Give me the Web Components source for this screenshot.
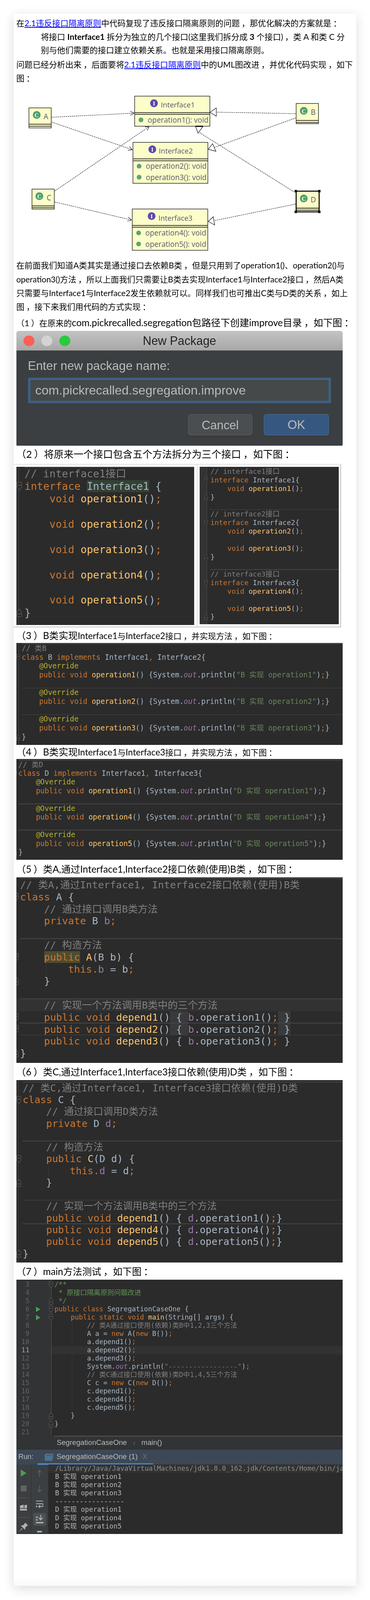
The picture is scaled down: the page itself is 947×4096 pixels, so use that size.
<!DOCTYPE html>
<html lang="zh">
<head>
<meta charset="utf-8">
<title>接口隔离原则</title>
<style>
  html, body { margin: 0; padding: 0; background: #fff; }
</style>
</head>
<body>
<blog-card>
  <blog-para>在<a href="#" style="color:#00f">2.1违反接口隔离原则</a>中代码复现了违反接口隔离原则的问题<cn-punct>，</cn-punct>那优化解决的方案就是<cn-punct>：</cn-punct></blog-para>
  <blog-para indent>将接口 <b>Interface1</b> 拆分为独立的几个接口(这里我们拆分成 <b>3</b> 个接口)<cn-punct>，</cn-punct>类 A 和类 C 分<br>别与他们需要的接口建立依赖关系。也就是采用接口隔离原则。</blog-para>
  <blog-para style="margin-top:2px">问题已经分析出来<cn-punct>，</cn-punct>后面要将<a href="#" style="color:#00f">2.1违反接口隔离原则</a>中的UML图改进<cn-punct>，</cn-punct>并优化代码实现<cn-punct>，</cn-punct>如下<br>图<cn-punct>：</cn-punct></blog-para>
  <uml-diagram></uml-diagram>
  <blog-para style="--lh:40.7px">在前面我们知道A类其实是通过接口去依赖B类<cn-punct>，</cn-punct>但是只用到了operation1()、operation2()与<br>operation3()方法<cn-punct>，</cn-punct>所以上面我们只需要让B类去实现Interface1与Interface2接口<cn-punct>，</cn-punct>然后A类<br>只需要与Interface1与Interface2发生依赖就可以。同样我们也可推出C类与D类的关系<cn-punct>，</cn-punct>如上<br>图<cn-punct>，</cn-punct>接下来我们用代码的方式实现<cn-punct>：</cn-punct></blog-para>

  <sub-heading style="--h:51.2px;--pt:2px"><cn-punct>（</cn-punct>1<cn-punct>）</cn-punct>在原来的<span style="font-size:28px">com.pickrecalled.segregation包路径下创建improve目录<cn-punct>，</cn-punct>如下图<cn-punct>：</cn-punct></span></sub-heading>
  <package-dialog></package-dialog>

  <sub-heading style="--h:50px;--fs:29px"><cn-punct>（</cn-punct>2<cn-punct>）</cn-punct>将原来一个接口包含五个方法拆分为三个接口<cn-punct>，</cn-punct>如下图<cn-punct>：</cn-punct></sub-heading>
  <code-table>
    <code-panel slot="left" src="one"></code-panel>
    <code-panel slot="right" src="three"></code-panel>
  </code-table>

  <sub-heading style="--h:46px;--pt:4px;--fs:28px"><cn-punct>（</cn-punct>3<cn-punct>）</cn-punct>B类实现<span style="font-size:26px">Interface1</span><span style="font-size:24px">与</span><span style="font-size:26px">Interface2</span><span style="font-size:24px">接口<cn-punct>，</cn-punct>并实现方法<cn-punct>，</cn-punct>如下图<cn-punct>：</cn-punct></span></sub-heading>
  <code-panel src="b"></code-panel>
  <sub-heading style="--h:42px;--fs:28px"><cn-punct>（</cn-punct>4<cn-punct>）</cn-punct>B类实现<span style="font-size:26px">Interface1</span><span style="font-size:24px">与</span><span style="font-size:26px">Interface3</span><span style="font-size:24px">接口<cn-punct>，</cn-punct>并实现方法<cn-punct>，</cn-punct>如下图<cn-punct>：</cn-punct></span></sub-heading>
  <code-panel src="d"></code-panel>
  <sub-heading style="--h:52px;--fs:28px;--pt:4px"><cn-punct>（</cn-punct>5<cn-punct>）</cn-punct>类A,通过Interface1,Interface2接口依赖(使用)B类<cn-punct>，</cn-punct>如下图<cn-punct>：</cn-punct></sub-heading>
  <code-panel src="a"></code-panel>
  <sub-heading style="--h:50px;--fs:28px;--pt:2px"><cn-punct>（</cn-punct>6<cn-punct>）</cn-punct>类C,通过Interface1,Interface3接口依赖(使用)D类<cn-punct>，</cn-punct>如下图<cn-punct>：</cn-punct></sub-heading>
  <code-panel src="c"></code-panel>
  <sub-heading style="--h:50.5px;--fs:28px;--pt:3px"><cn-punct>（</cn-punct>7<cn-punct>）</cn-punct>main方法测试<cn-punct>，</cn-punct>如下图<cn-punct>：</cn-punct></sub-heading>
  <run-window></run-window>
</blog-card>

<script>
const CN = '"Lato","Noto Sans CJK SC",sans-serif';
const MONO = '"DejaVu Sans Mono","Noto Sans CJK SC",monospace';

// all sizes below are in reference pixels; scale() brings them down to the 947 wide window
const S = 0.87;
const scale = html => html
  .replace(/(-?\d*\.?\d+)px/g, (_, v) => +(v * S).toFixed(3) + 'px')
  .replace(/(<svg\b[^>]*?\swidth=")([\d.]+)("\s+height=")([\d.]+)"/g,
    (_, a1, w, a2, h) => `${a1}${+(w * S).toFixed(3)}${a2}${+(h * S).toFixed(3)}"`);
const mount = (el, html) => { el.attachShadow({ mode: 'open' }).innerHTML = scale(html); };
document.querySelectorAll('[style]').forEach(el => el.setAttribute('style', scale(el.getAttribute('style'))));

// token helpers for the code screenshots
const tok = cls => t => `<span class="${cls}">${t}</span>`;
const k = tok('k'), m = tok('m'), c = tok('c'), s = tok('s'), a = tok('a'), f = tok('f'), o = tok('o');
const d = tok('d'), hb = tok('hb'), hy = tok('hy'), hg = tok('hg');
const semi = k(';');

class BlogCard extends HTMLElement {
  connectedCallback() {
    mount(this, `
      <style>
        :host {
          display: block; box-sizing: border-box; width: 1008px; height: 4627px;
          margin: 40px 40px 40px 40px; padding: 8px; color: #000;
          background: linear-gradient(#fff calc(100% - 24px), #f8f8f8);
          box-shadow: 0 8px 32px rgba(0,0,0,.14);
          font: 24px/40px ${CN};
        }
      </style><slot></slot>`);
  }
}

class BlogPara extends HTMLElement {
  connectedCallback() {
    mount(this, `
      <style>
        :host { display: block; white-space: nowrap; line-height: var(--lh, 40px); filter: blur(.3px); }
        :host([indent]) { margin-left: 72px; }
      </style><slot></slot>`);
  }
}

class CnPunct extends HTMLElement {
  connectedCallback() {
    // line-height 0: the second font must not make the line box grow
    mount(this, `
      <style>:host { display: inline; font-family: "Noto Sans CJK TC",sans-serif; line-height: 0; }</style><slot></slot>`);
  }
}

class SubHeading extends HTMLElement {
  connectedCallback() {
    mount(this, `
      <style>
        :host {
          display: flex; align-items: center; box-sizing: border-box; white-space: nowrap; filter: blur(.3px);
          height: var(--h, 50px); padding-top: var(--pt, 0); font-size: var(--fs, 24px); line-height: 1;
        }
        div { display: block; }
      </style><div><slot></slot></div>`);
  }
}

class UmlDiagram extends HTMLElement {
  connectedCallback() {
    const LINE = '#1c1c1c', FILL = '#fdfdc9', TXT = '#55566a';
    const dash = (x1, y1, x2, y2) => `<line x1="${x1}" y1="${y1}" x2="${x2}" y2="${y2}" stroke="${LINE}" stroke-width="1.3" stroke-dasharray="4 2"/>`;
    const dep = (x1, y1, x2, y2) => {
      const an = Math.atan2(y2 - y1, x2 - x1), l = 13;
      const p = sg => `${x2 - l * Math.cos(an + sg * .5)},${y2 - l * Math.sin(an + sg * .5)}`;
      return dash(x1, y1, x2, y2) + `<polyline points="${p(1)} ${x2},${y2} ${p(-1)}" fill="none" stroke="${LINE}" stroke-width="1.3"/>`;
    };
    const tri = pts => `<polygon points="${pts}" fill="#fff" stroke="${LINE}" stroke-width="1.5"/>`;
    const circle = (x, y, col, ch) => `<circle cx="${x}" cy="${y}" r="11.5" fill="${col}"/><text x="${x}" y="${y + 1}" fill="#fff" font-family="Liberation Serif,serif" font-size="17" font-weight="700" text-anchor="middle" dominant-baseline="central">${ch}</text>`;
    const txt = (x, y, v, fs = 21.9) => `<text x="${x}" y="${y}" fill="${TXT}" font-size="${fs}" dominant-baseline="central">${v}</text>`;
    const box = (x1, y1, x2, y2, l1, l2) => `<rect x="${x1}" y="${y1}" width="${x2 - x1}" height="${y2 - y1}" fill="${FILL}" stroke="${LINE}" stroke-width="1.6"/>
      <line x1="${x1}" x2="${x2}" y1="${l1}" y2="${l1}" stroke="${LINE}" stroke-width="2"/><line x1="${x1}" x2="${x2}" y1="${l2}" y2="${l2}" stroke="${LINE}" stroke-width="2"/>`;
    const op = (x, y, v) => `<circle cx="${x}" cy="${y}" r="7" fill="#5fa374"/>` + txt(x + 20, y, v);
    const handles = [[873.8, 563], [943.5, 563], [873.8, 624], [943.5, 624]]
      .map(([x, y]) => `<rect x="${x - 3.5}" y="${y - 3.5}" width="7" height="7" fill="#000"/>`).join('');
    mount(this, `
      <style>:host { display: block; height: 510px; filter: blur(.35px); } svg { display: block; font-family: "Open Sans",sans-serif; }</style>
      <svg width="960.3" height="510" viewBox="48 250 965 510" preserveAspectRatio="none">
        ${dep(152, 345.6, 396, 333.5)}${dep(152, 359.7, 390.5, 441)}${dep(161.8, 562.3, 440.7, 373)}${dep(161.8, 595, 388.4, 648)}
        ${dash(873.8, 335, 639, 330.6)}${dash(873.8, 347.5, 634, 434)}${dash(868, 564.7, 588, 390)}${dash(873.8, 601, 632, 650)}
        ${box(397.5, 283.5, 620, 372, 332, 337)}
        ${circle(454.7, 304.4, '#6049ac', 'I')}${txt(475, 308.3, 'Interface1', 21.3)}${op(416.3, 353.3, 'operation1(): void')}
        ${box(392.6, 419.5, 614, 540, 468, 473.6)}
        ${circle(449.8, 440, '#6049ac', 'I')}${txt(469, 444, 'Interface2', 21.3)}${op(410.7, 489.6, 'operation2(): void')}${op(410.7, 522, 'operation3(): void')}
        ${box(390.5, 615.6, 613.7, 737, 664, 669)}
        ${circle(447.7, 636.5, '#6049ac', 'I')}${txt(468, 640.8, 'Interface3', 21.3)}${op(409.3, 686, 'operation4(): void')}${op(409.3, 718.4, 'operation5(): void')}
        ${box(85, 318, 151, 377, 366, 372)}${circle(108, 338.8, '#4f9f6f', 'C')}${txt(128.3, 342.7, 'A', 22)}
        ${box(875, 305, 941, 364.5, 355, 361)}${circle(897.5, 326.7, '#4f9f6f', 'C')}${txt(918.4, 330.6, 'B', 22)}
        ${box(94, 557, 160, 616, 606.4, 611.7)}${circle(115.8, 577.8, '#4f9f6f', 'C')}${txt(137.4, 581.7, 'C', 22)}
        <rect x="875" y="563" width="68" height="61" fill="${FILL}" stroke="#000" stroke-width="3"/>
        <line x1="875" x2="943" y1="613" y2="613" stroke="#000" stroke-width="2"/><line x1="875" x2="943" y1="619" y2="619" stroke="#000" stroke-width="2"/>
        ${circle(897.5, 584.6, '#4f9f6f', 'C')}${txt(917.7, 588.5, 'D', 22)}${handles}
        ${tri('620.1,330.7 638.9,318.3 638.9,342.7')}${tri('615.1,440 627.9,423.3 637.9,445.7')}
        ${tri('577.6,373 599.4,373 585,392.3')}<rect x="577.6" y="370.5" width="22" height="3" fill="#000"/>${tri('615,652 630,638.4 634,662.6')}
      </svg>`);
  }
}

class PackageDialog extends HTMLElement {
  connectedCallback() {
    mount(this, `
      <style>
        :host { display: block; width: 960px; height: 338px; border-radius: 9px 9px 3px 3px; overflow: hidden; background: #3c3f41; color: #bbb; line-height: 1; font-family: "Liberation Sans",sans-serif; filter: blur(.35px); }
        .bar { height: 58px; display: flex; align-items: center; justify-content: center; position: relative; color: #222; font-size: 35px;
               background: linear-gradient(#c4c3c4, #a8a7a8); border-bottom: 2px solid #555; box-sizing: border-box; }
        .dots { position: absolute; left: 21.4px; top: 13px; display: flex; gap: 20.8px; }
        .dots i { width: 32px; height: 32px; border-radius: 50%; }
        .body { padding: 26px 35px 0 35.3px; }
        .label { font-size: 36px; height: 38px; line-height: 38px; margin-left: -1.4px; }
        .input { box-sizing: border-box; height: 74px; margin-top: 16px; border: 7px solid #3d6185; border-radius: 3px; background: #45494a; font-size: 36.9px; line-height: 60px; padding-left: 13.7px; }
        .btns { display: flex; justify-content: flex-end; gap: 33.5px; margin-top: 33px; margin-right: 5.6px; }
        .btn { box-sizing: border-box; width: 190px; height: 63px; border-radius: 7px; font-size: 35px; display: flex; align-items: center; justify-content: center;
               background: #4a4e50; border: 2px solid #5c5f61; box-shadow: 0 2px 3px #333; }
        .btn.ok { width: 191px; background: #365880; border-color: #4c708c; font-size: 36px; }
      </style>
      <div class="bar">
        <div class="dots"><i style="background:#fc5f57"></i><i style="background:#d3d3d3"></i><i style="background:#2ac940"></i></div>
        New Package
      </div>
      <div class="body">
        <div class="label">Enter new package name:</div>
        <div class="input">com.pickrecalled.segregation.improve</div>
        <div class="btns"><div class="btn">Cancel</div><div class="btn ok">OK</div></div>
      </div>`);
  }
}

class CodeTable extends HTMLElement {
  connectedCallback() {
    mount(this, `
      <style>
        :host { display: grid; grid-template-columns: 538.8px 422.2px; box-sizing: border-box; width: 964px; height: 480px; margin: 4px 0 0 -8px;
                border-top: 2px solid #c4c4c4; border-bottom: 3px solid #c4c4c4; border-right: 3px solid #c4c4c4; }
        div { box-sizing: border-box; padding: 6px 0 0 8px; }
        .r { border-left: 2px solid #c4c4c4; padding-left: 7px; }
      </style>
      <div><slot name="left"></slot></div><div class="r"><slot name="right"></slot></div>`);
  }
}

// one line: html, plus optional sep (rule above), fold (o|c), bg, guide x
const L = (h = '', opt = {}) => ({ h, ...opt });

const iface = (n, ops, gapAfter) => {
  const rows = [L(c(`// interface${n}接口`), { sep: 1 }), L(`${k('interface')} ${`Interface${n}`}{`, { fold: 'o' })];
  ops.forEach((p, i) => {
    if (i) rows.push(L());
    rows.push(L(`    ${k('void')} ${m(`operation${p}`)}()${semi}`));
  });
  rows.push(L('}', { fold: 'c' }));
  if (gapAfter) rows.push(L());
  return rows;
};
const impl = (cls, list) => {
  const rows = [];
  list.forEach((p, i) => {
    rows.push(L(`    ${a('@Override')}`, i ? { sep: 1 } : {}));
    rows.push(L(`    ${k('public')} ${k('void')} ${m(`operation${p}`)}() {System.${o('out')}.println(${s(`"${cls} 实现 operation${p}"`)})${semi}}`));
    if (i < list.length - 1) rows.push(L());
  });
  return rows;
};

const PANELS = {
  one: { w: 523.8, h: 466, top: 2.4, x: 24.1, size: 30.45, lh: 37.2, gx: 6, fx: 1, rows: [
    L(c('// interface1接口'), { sep: 1 }),
    L(`${k('interface')} ${hg('Interface1')} {`, { fold: 'o' }),
    ...[1, 2, 3, 4, 5].flatMap((p, i) => [...(i ? [L()] : []), L(`    ${k('void')} ${m(`operation${p}`)}()${semi}`)]),
    L('}', { fold: 'c' })] },
  three: { w: 410, h: 464, top: 1.4, x: 31.9, size: 20.75, lh: 25.2, gx: 20.8, gbg: '#313335', fx: 14, rows: [
    ...iface(1, [1], 1), ...iface(2, [2, 3], 1), ...iface(3, [4, 5], 0)] },
  b: { w: 960, h: 300, top: 3.3, x: 15.8, size: 21.4, lh: 26.1, gx: 6, fx: 0, rows: [
    L(c('// 类B'), { sep: 1 }),
    L(`${k('class')} B ${k('implements')} Interface1${k(',')} Interface2{`, { fold: 'o' }),
    ...impl('B', [1, 2, 3]), L('}', { fold: 'c' })] },
  d: { w: 960, h: 296, top: 3.6, x: 6.1, size: 21.4, lh: 25.8, gx: -9, fx: -9, rows: [
    L(c('// 类D'), { sep: 1 }),
    L(`${k('class')} D ${k('implements')} Interface1${k(',')} Interface3{`, { fold: 'o' }),
    ...impl('D', [1, 4, 5]), L('}', { fold: 'c' })] },
  a: { w: 960, h: 546, top: 4.3, x: 11, size: 29.35, lh: 35.4, gx: -9, fx: -8, rows: [
    L(c('// 类A,通过Interface1, Interface2接口依赖(使用)B类'), { sep: 1 }),
    L(`${k('class')} A {`, { fold: 'o' }),
    L(`    ${c('// 通过接口调用B类方法')}`),
    L(`    ${k('private')} B ${f('b')}${semi}`),
    L(),
    L(`    ${c('// 构造方法')}`, { sep: 1 }),
    L(`    ${hy(k('public'))} ${m('A')}(B b) {`, { fold: 'o' }),
    L(`        ${k('this')}${k('.')}${f('b')} = b${semi}`, { guide: 87.3 }),
    L('    }', { fold: 'c' }),
    L(),
    L(`    ${c('// 实现一个方法调用B类中的三个方法')}`, { sep: 1, bg: '#323232' }),
    L(`    ${k('public')} ${k('void')} ${m('depend1')}()${hb(' { ')}${f('b')}.operation1()${semi}${hb(' }')}`, { fold: 'o' }),
    L(`    ${k('public')} ${k('void')} ${m('depend2')}()${hb(' { ')}${f('b')}.operation2()${semi}${hb(' }')}`, { fold: 'o', sep: 1 }),
    L(`    ${k('public')} ${k('void')} ${m('depend3')}() { ${f('b')}.operation3()${semi} }`, { sep: 1 }),
    L('}', { fold: 'c' })] },
  c: { w: 960, h: 537.5, top: 7, x: 18.6, size: 28.85, lh: 34.8, gx: 5, fx: 0, rows: [
    L(c('// 类C,通过Interface1, Interface3接口依赖(使用)D类'), { sep: 1 }),
    L(`${k('class')} C {`, { fold: 'o' }),
    L(`    ${c('// 通过接口调用D类方法')}`),
    L(`    ${k('private')} D ${f('d')}${semi}`),
    L(),
    L(`    ${c('// 构造方法')}`, { sep: 1 }),
    L(`    ${k('public')} ${m('C')}(D d) {`, { fold: 'o' }),
    L(`        ${k('this')}${k('.')}${f('d')} = d${semi}`, { guide: 94 }),
    L('    }', { fold: 'c' }),
    L(),
    L(`    ${c('// 实现一个方法调用B类中的三个方法')}`, { sep: 1 }),
    L(`    ${k('public')} ${k('void')} ${m('depend1')}() { ${f('d')}.operation1()${semi}}`),
    L(`    ${k('public')} ${k('void')} ${m('depend4')}() { ${f('d')}.operation4()${semi}}`, { sep: 1 }),
    L(`    ${k('public')} ${k('void')} ${m('depend5')}() { ${f('d')}.operation5()${semi}}`),
    L('}', { fold: 'c' })] }
};

const TOKENS = `
  .k { color: #cc7832; } .m { color: #ffc66d; } .c { color: #808080; } .s { color: #6a8759; }
  .a { color: #bbb529; } .f { color: #9876aa; } .o { color: #9876aa; font-style: italic; }
  .d { color: #629755; } .hb { background: #393a3b; } .hy { background: #504c2e; } .hg { background: #344134; }
`;
const foldSvg = (kind, w, h) => `<svg width="${w}" height="${h}" viewBox="0 0 14 24" preserveAspectRatio="none">
  <path d="${kind === 'o' ? 'M1 1H13V15L7 23L1 15Z' : 'M1 23H13V9L7 1L1 9Z'}" fill="#2b2b2b" stroke="#5a5a5a" stroke-width="1.5"/>
  <path d="M3.5 ${kind === 'o' ? 9 : 15}H10.5" stroke="#777" stroke-width="1.5"/></svg>`;

class CodePanel extends HTMLElement {
  connectedCallback() {
    const p = PANELS[this.getAttribute('src')];
    const fw = p.size * .5, fh = p.size * .82;
    const rows = p.rows.map(r => `<div class="row" ${r.bg ? `style="background:${r.bg}"` : ''}>${r.sep ? '<i class="sep"></i>' : ''}${r.guide ? `<i class="guide" style="left:${r.guide}px"></i>` : ''}${r.fold ? `<b class="fold">${foldSvg(r.fold, fw, fh)}</b>` : ''}<span class="code">${r.h || ' '}</span></div>`).join('');
    mount(this, `
      <style>
        :host { display: block; position: relative; box-sizing: border-box; width: ${p.w}px; height: ${p.h}px; padding-top: ${p.top}px; overflow: hidden; background: #2b2b2b; color: #a9b7c6; font: ${p.size}px/${p.lh}px ${MONO}; filter: blur(.35px); }
        .gutter { position: absolute; left: 0; top: 0; bottom: 0; width: ${Math.max(p.gx, 0)}px; background: ${p.gbg || 'transparent'}; border-right: 2px solid #4a4a4a; }
        .row { position: relative; height: ${p.lh}px; padding-left: ${p.x}px; }
        .code { position: relative; white-space: pre; }
        .sep { position: absolute; left: ${p.x}px; right: 0; top: -2px; height: 2px; background: #464646; }
        .guide { position: absolute; top: 0; bottom: 0; width: 1px; background: #3d3d3d; }
        .fold { position: absolute; left: ${p.fx}px; top: ${(p.lh - fh) / 2}px; line-height: 0; }
        ${TOKENS}
      </style>
      ${p.gx >= 0 ? '<div class="gutter"></div>' : ''}${rows}`);
  }
}

class RunWindow extends HTMLElement {
  connectedCallback() {
    const run = `<svg class="run" width="13" height="16" viewBox="0 0 13 16"><path d="M0 0L13 8L0 16Z" fill="#499c54"/></svg>`;
    const edit = [
      ['3', d('/**'), { fold: 'o' }],
      ['4', d(' * 原接口隔离原则问题改进')],
      ['5', d(' */'), { fold: 'c' }],
      ['6', `${k('public')} ${k('class')} SegregationCaseOne {`, { fold: 'o', run: 1 }],
      ['7', `    ${k('public')} ${k('static')} ${k('void')} ${m('main')}(String[] args) {`, { fold: 'o', run: 1 }],
      ['8', `        ${c('// 类A通过接口使用(依赖)类B中1,2,3三个方法')}`],
      ['9', `        A a = ${k('new')} A(${k('new')} B())${semi}`],
      ['10', `        a.depend1()${semi}`],
      ['11', `        a.depend2()${semi}`, { cur: 1 }],
      ['12', `        a.depend3()${semi}`],
      ['13', `        System.${o('out')}.println(${s('"-----------------"')})${semi}`],
      ['14', `        ${c('// 类C通过接口使用(依赖)类D中1,4,5三个方法')}`],
      ['15', `        C c = ${k('new')} C(${k('new')} D())${semi}`],
      ['16', `        c.depend1()${semi}`],
      ['17', `        c.depend4()${semi}`],
      ['18', `        c.depend5()${semi}`],
      ['19', '    }', { fold: 'c' }],
      ['20', '}', { fold: 'c' }],
      ['21', '']
    ];
    const rows = edit.map(([n, h, op = {}]) => `
      <div class="row ${op.cur ? 'cur' : ''}">
        <div class="gut"><span class="num">${n}</span>${op.run ? run : ''}${op.fold ? `<b class="fold">${foldSvg(op.fold, 13, 20)}</b>` : ''}</div>
        <span class="code">${h || ' '}</span>
      </div>`).join('');
    const out = ['B 实现 operation1', 'B 实现 operation2', 'B 实现 operation3', '-----------------', 'D 实现 operation1', 'D 实现 operation4', 'D 实现 operation5']
      .map(x => `<div class="ln">${x}</div>`).join('');
    mount(this, `
      <style>
        :host { display: block; width: 960px; height: 748px; overflow: hidden; background: #2b2b2b; color: #a9b7c6; font: 19.9px/24.15px ${MONO}; filter: blur(.35px); }
        .editor { position: relative; height: 461px; padding-top: 2px; box-sizing: border-box; overflow: hidden; }
        .indent { position: absolute; left: 163.7px; top: 99px; width: 1px; height: 290px; background: #3b3b3b; }
        .row { display: flex; height: 24.15px; position: relative; }
        .cur { background: #323232; }
        .gut { position: relative; flex: none; box-sizing: border-box; width: 103.3px; height: 24.15px; background: #313335; border-right: 1px solid #555; display: flex; align-items: center; }
        .num { width: 38.7px; text-align: right; color: #606366; }
        .cur .num { color: #a4a3a3; }
        .run { margin-left: 18.8px; }
        .fold { position: absolute; left: 95.6px; top: 2px; line-height: 0; }
        .code { padding-left: 9px; white-space: pre; }
        ${TOKENS}
        .crumb { height: 39px; margin-top: -2px; box-sizing: border-box; border-top: 3px solid transparent; background: #313335; color: #bbb; display: flex; align-items: center; padding-left: 119px; font: 21.5px/1 "Liberation Sans",sans-serif; position: relative; }
        .crumb::before { content: ""; position: absolute; left: 112.3px; right: 0; top: -3px; height: 3px; background: #4a4a4a; }
        .crumb i { font-style: normal; color: #666; margin: 0 17.6px; }
        .tabs { height: 45px; box-sizing: border-box; background: #3c4856; border-top: 1px solid #2f3133; display: flex; align-items: center; color: #bbb; font: 21.5px/1 "Liberation Sans",sans-serif; position: relative; }
        .tabs .run-l { margin-left: 6px; font-size: 21px; }
        .tabs svg { margin-left: 34px; }
        .tabs .name { margin-left: 9px; }
        .tabs .x { margin-left: 14px; color: #68707a; }
        .tabs::after { content: ""; position: absolute; left: 62px; width: 341px; bottom: -2px; height: 5px; background: #4a88c7; }
        .low { display: flex; height: 203px; }
        .col { flex: none; background: #3c3f41; display: flex; flex-direction: column; align-items: center; box-sizing: border-box; border-right: 1px solid #323232; }
        .c1 { width: 43.7px; } .c2 { width: 51px; }
        .col svg { display: block; flex: none; }
        .col hr { width: 34px; height: 1px; border: 0; margin: 19px 0 0; background: #5a5d5f; flex: none; }
        .on { width: 37px; height: 38px; margin-top: 12px; border-radius: 5px; background: #4c5052; display: flex; align-items: center; justify-content: center; flex: none; }
        .out { flex: 1; min-width: 0; overflow: hidden; color: #b9b9b9; position: relative; }
        .ln { padding-left: 19.5px; white-space: pre; }
        .path { padding-left: 19.5px; white-space: pre; height: 25px; line-height: 25px; background: #323232; color: #8f8f8f; }
      </style>
      <div class="editor"><i class="indent"></i>${rows}</div>
      <div class="crumb">SegregationCaseOne<i>›</i>main()</div>
      <div class="tabs">
        <span class="run-l">Run:</span>
        <svg width="25" height="22" viewBox="0 0 25 22"><path d="M6 3V0H24V15H21" fill="none" stroke="#5d6875" stroke-width="2"/><rect x="1" y="4" width="19" height="17" fill="#44515f" stroke="#7b8591" stroke-width="2"/><rect x="3" y="8" width="15" height="11" fill="#3b7a99"/></svg>
        <span class="name">SegregationCaseOne (1)</span><span class="x">X</span>
      </div>
      <div class="low">
        <div class="col c1">
          <svg style="margin-top:15px" width="17" height="21" viewBox="0 0 17 21"><path d="M0 0L17 10.5L0 21Z" fill="#499c54"/></svg>
          <svg style="margin-top:26px" width="17.4" height="17.4" viewBox="0 0 18 18"><rect width="18" height="18" fill="#626262"/></svg>
          <hr>
          <svg style="margin-top:19px" width="21" height="18" viewBox="0 0 21 18"><path d="M0 3L11 0V10H0ZM13 2L21 0V10H13ZM0 12H21V18H0Z" fill="#afb1b3"/></svg>
          <hr>
          <svg style="margin-top:15px" width="26" height="26" viewBox="0 0 26 26"><path d="M18 0L26 8L19 13L17 21L5 9L13 7Z M8 16L10 18L0 26Z" fill="#afb1b3"/></svg>
        </div>
        <div class="col c2">
          <svg style="margin-top:17px" width="16" height="20" viewBox="0 0 16 20"><path d="M8 20V2M2 8L8 1L14 8" fill="none" stroke="#5f6163" stroke-width="2"/></svg>
          <svg style="margin-top:25px" width="16" height="20" viewBox="0 0 16 20"><path d="M8 0V18M2 12L8 19L14 12" fill="none" stroke="#5f6163" stroke-width="2"/></svg>
          <svg style="margin-top:24px" width="22" height="25" viewBox="0 0 22 25"><path d="M0 2H21M0 10H18A3 3 0 0 1 18 18H8M12 14L8 18L12 22" fill="none" stroke="#afb1b3" stroke-width="2.5"/><rect x="0" y="16" width="4" height="4" fill="#afb1b3"/></svg>
          <div class="on"><svg width="22" height="26" viewBox="0 0 22 26"><path d="M14 0V14M8 8L14 15L20 8" fill="none" stroke="#afb1b3" stroke-width="2.5"/><path d="M0 5H5V9H0ZM0 13H5V17H0ZM0 21H22V25H0Z" fill="#afb1b3"/></svg></div>
          <svg style="margin-top:15px" width="14" height="5" viewBox="0 0 14 5"><rect width="14" height="5" fill="#afb1b3"/></svg>
        </div>
        <div class="out"><div class="path">/Library/Java/JavaVirtualMachines/jdk1.8.0_162.jdk/Contents/Home/bin/java</div>${out}</div>
      </div>`);
  }
}

customElements.define('blog-card', BlogCard);
customElements.define('blog-para', BlogPara);
customElements.define('cn-punct', CnPunct);
customElements.define('sub-heading', SubHeading);
customElements.define('uml-diagram', UmlDiagram);
customElements.define('package-dialog', PackageDialog);
customElements.define('code-table', CodeTable);
customElements.define('code-panel', CodePanel);
customElements.define('run-window', RunWindow);
</script>
</body>
</html>
